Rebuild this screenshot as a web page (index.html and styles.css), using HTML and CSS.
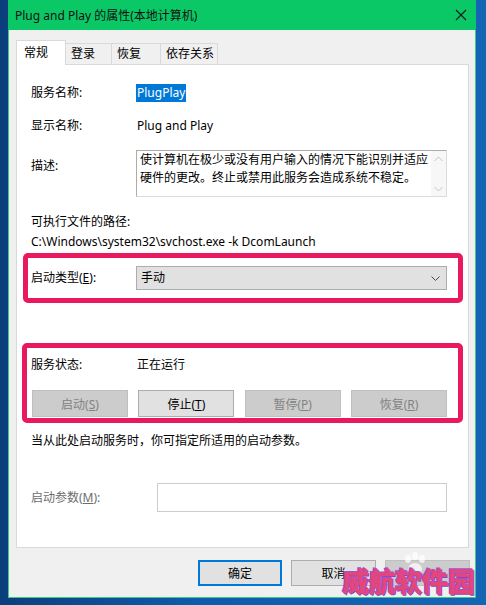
FILE: index.html
```html
<!DOCTYPE html>
<html lang="zh-CN">
<head>
  <meta charset="UTF-8">
  <title>Plug and Play 的属性(本地计算机)</title>
  <link rel="stylesheet" href="styles.css">
</head>
<body>
  <div class="window">
    <!-- Title bar -->
    <div class="titlebar">
      <span class="title">Plug and Play 的属性(本地计算机)</span>
      <svg class="close" width="12" height="12" viewBox="0 0 12 12">
        <path d="M1 1 L11 11 M11 1 L1 11" stroke="#1b1b1b" stroke-width="1.1" fill="none"/>
      </svg>
    </div>

    <!-- Tabs -->
    <div class="tabs">
      <div class="tab active" style="width:50px">常规</div>
      <div class="tab" style="width:46px">登录</div>
      <div class="tab" style="width:49px">恢复</div>
      <div class="tab" style="width:57px">依存关系</div>
    </div>

    <!-- General page -->
    <div class="panel">
      <div class="row">
        <span class="label">服务名称:</span>
        <span class="selected">PlugPlay</span>
      </div>
      <div class="row gap15">
        <span class="label">显示名称:</span>
        <span>Plug and Play</span>
      </div>
      <div class="row desc-row">
        <span class="label">描述:</span>
        <div class="textbox">
          <div class="textbox-text">使计算机在极少或没有用户输入的情况下能识别并适应硬件的更改。终止或禁用此服务会造成系统不稳定。</div>
          <div class="scrollbar">
            <svg width="9" height="6" viewBox="0 0 9 6"><path d="M0.5 5 L4.5 1 L8.5 5" stroke="#c4c4c4" fill="none"/></svg>
            <svg width="9" height="6" viewBox="0 0 9 6"><path d="M0.5 1 L4.5 5 L8.5 1" stroke="#c4c4c4" fill="none"/></svg>
          </div>
        </div>
      </div>
      <div class="line path-label">可执行文件的路径:</div>
      <div class="line path">C:\Windows\system32\svchost.exe -k DcomLaunch</div>

      <div class="mark mark-startup">
        <div class="row">
          <span class="label">启动类型(<u>E</u>):</span>
          <div class="select">
            <span>手动</span>
            <svg width="9" height="5" viewBox="0 0 9 5"><path d="M0.5 0.5 L4.5 4.5 L8.5 0.5" stroke="#4a4a4a" fill="none"/></svg>
          </div>
        </div>
      </div>

      <div class="mark mark-status">
        <div class="row">
          <span class="label">服务状态:</span>
          <span>正在运行</span>
        </div>
        <div class="buttons">
          <button class="btn" disabled>启动(<u>S</u>)</button>
          <button class="btn">停止(<u>T</u>)</button>
          <button class="btn" disabled>暂停(<u>P</u>)</button>
          <button class="btn" disabled>恢复(<u>R</u>)</button>
        </div>
      </div>

      <div class="line hint">当从此处启动服务时，你可指定所适用的启动参数。</div>

      <div class="row param-row">
        <span class="label wide disabled-text">启动参数(<u>M</u>):</span>
        <div class="input"></div>
      </div>
    </div>

    <!-- Dialog buttons -->
    <div class="footer">
      <button class="btn default">确定</button>
      <button class="btn">取消</button>
      <button class="btn" disabled></button>
    </div>
  </div>

  <div class="watermark">
    <svg class="paw" width="26" height="24" viewBox="0 0 26 24">
      <g fill="rgba(255,255,255,0.7)">
        <ellipse cx="6" cy="7" rx="3" ry="4"/>
        <ellipse cx="13" cy="4" rx="3" ry="4"/>
        <ellipse cx="20" cy="7" rx="3" ry="4"/>
        <ellipse cx="13" cy="17" rx="7" ry="6"/>
      </g>
    </svg>
    <span class="site">威航软件园</span>
  </div>
</body>
</html>
```

FILE: styles.css
```css
body {
  margin: 0;
  height: 605px;
  overflow: hidden;
  background: linear-gradient(90deg, #0b3f7c 0, #0d5cab 40%, #1466b5 100%);
  font-family: "Noto Sans", "Noto Sans CJK SC", sans-serif;
  font-size: 12px;
  color: #000;
}

.window {
  margin-left: 8px;
  width: 468px;
  height: 598px;
  box-sizing: border-box;
  background: #f0f0f0;
  border: 1px solid #3cc98a;
  border-top: none;
}

/* Title bar */
.titlebar {
  height: 30px;
  background: #0bc866;
  display: flex;
  align-items: center;
  justify-content: space-between;
  padding: 0 8px 0 7px;
  margin: 0 -1px;
}
.title {
  font-size: 12px;
  color: #111;
}
.close {
  margin-right: 1px;
}

/* Tabs */
.tabs {
  display: flex;
  align-items: flex-end;
  margin: 10px 0 0 7px;
  height: 24px;
}
.tab {
  box-sizing: border-box;
  height: 21px;
  line-height: 20px;
  padding-left: 5px;
  border: 1px solid #d9d9d9;
  border-bottom: none;
  border-left: none;
  background: #f0f0f0;
}
.tab.active {
  height: 25px;
  line-height: 23px;
  padding-left: 7px;
  margin-bottom: -1px;
  background: #fff;
  border-left: 1px solid #d9d9d9;
  position: relative;
}

/* Tab page */
.panel {
  box-sizing: border-box;
  width: 453px;
  height: 484px;
  margin: 0 6px 0 7px;
  padding: 19px 21px 0 14px;
  background: #fff;
  border: 1px solid #d9d9d9;
}
.row {
  display: flex;
  align-items: center;
  line-height: 18px;
}
.label {
  flex: none;
  width: 106px;
}
.label.wide {
  width: 126px;
}
.gap15 {
  margin-top: 15px;
}
.selected {
  background: #0078d7;
  color: #fff;
  padding: 0 1px;
  margin-left: -1px;
}
.line {
  line-height: 18px;
  white-space: nowrap;
}

.desc-row {
  margin-top: 15px;
  align-items: flex-start;
}
.desc-row .label {
  padding-top: 7px;
}
.textbox {
  display: flex;
  box-sizing: border-box;
  width: 311px;
  height: 47px;
  margin-left: -1px;
  border: 1px solid #acacac;
  border-right-color: #dcdcdc;
  border-bottom-color: #dcdcdc;
}
.textbox-text {
  flex: 1;
  padding: 0 0 0 3px;
  line-height: 18px;
  overflow: hidden;
}
.scrollbar {
  width: 15px;
  display: flex;
  flex-direction: column;
  justify-content: space-between;
  align-items: center;
  padding: 5px 0 4px;
  background: #f7f7f7;
}

.path-label {
  margin-top: 16px;
}
.path {
  margin-top: 2px;
}

/* Red annotation frames */
.mark {
  border: 5px solid #e8195e;
  border-radius: 5px;
}
.mark-startup {
  margin: 2px -16px 0 -8px;
  padding: 8px 11px 8px 3px;
}
.mark-status {
  margin: 40px -16px 0 -9px;
  padding: 8px 11px 1px 4px;
}

.select {
  box-sizing: border-box;
  width: 311px;
  height: 24px;
  margin-left: -1px;
  padding: 0 6px 0 4px;
  display: flex;
  align-items: center;
  justify-content: space-between;
  background: #e1e1e1;
  border: 1px solid #adadad;
}

.buttons {
  display: flex;
  justify-content: space-between;
  margin: 16px 0 0 1px;
}

/* Buttons */
.btn {
  box-sizing: border-box;
  width: 96px;
  height: 27px;
  padding: 0;
  font-family: "Noto Sans", "Noto Sans CJK SC", sans-serif;
  font-size: 12px;
  color: #000;
  background: #e1e1e1;
  border: 1px solid #adadad;
}
.btn:disabled {
  background: #cccccc;
  border-color: #bfbfbf;
  color: #838383;
}

.hint {
  margin-top: 9px;
}

.param-row {
  margin-top: 33px;
}
.disabled-text {
  color: #6d6d6d;
}
.input {
  box-sizing: border-box;
  width: 290px;
  height: 29px;
  border: 1px solid #cccccc;
  background: #fff;
}

/* Dialog footer */
.footer {
  display: flex;
  justify-content: flex-end;
  gap: 9px;
  margin: 12px 5px 0 0;
}
.footer .btn {
  width: 85px;
  height: 26px;
}
.footer .btn.default {
  width: 84px;
  border: 2px solid #0078d7;
}

/* Watermark over the bottom corner */
.watermark {
  position: absolute;
  left: 340px;
  top: 552px;
  width: 140px;
  height: 50px;
}
.paw {
  position: absolute;
  left: 62px;
  top: 0;
}
.site {
  position: absolute;
  left: 2px;
  top: 12px;
  font-family: "Noto Sans CJK SC", sans-serif;
  font-size: 27px;
  font-weight: 900;
  line-height: 34px;
  letter-spacing: -0.5px;
  color: #e4467a;
  text-shadow: -1px -1px 0 #9b54d6, 1px 1px 0 #8a44c4;
}
```
